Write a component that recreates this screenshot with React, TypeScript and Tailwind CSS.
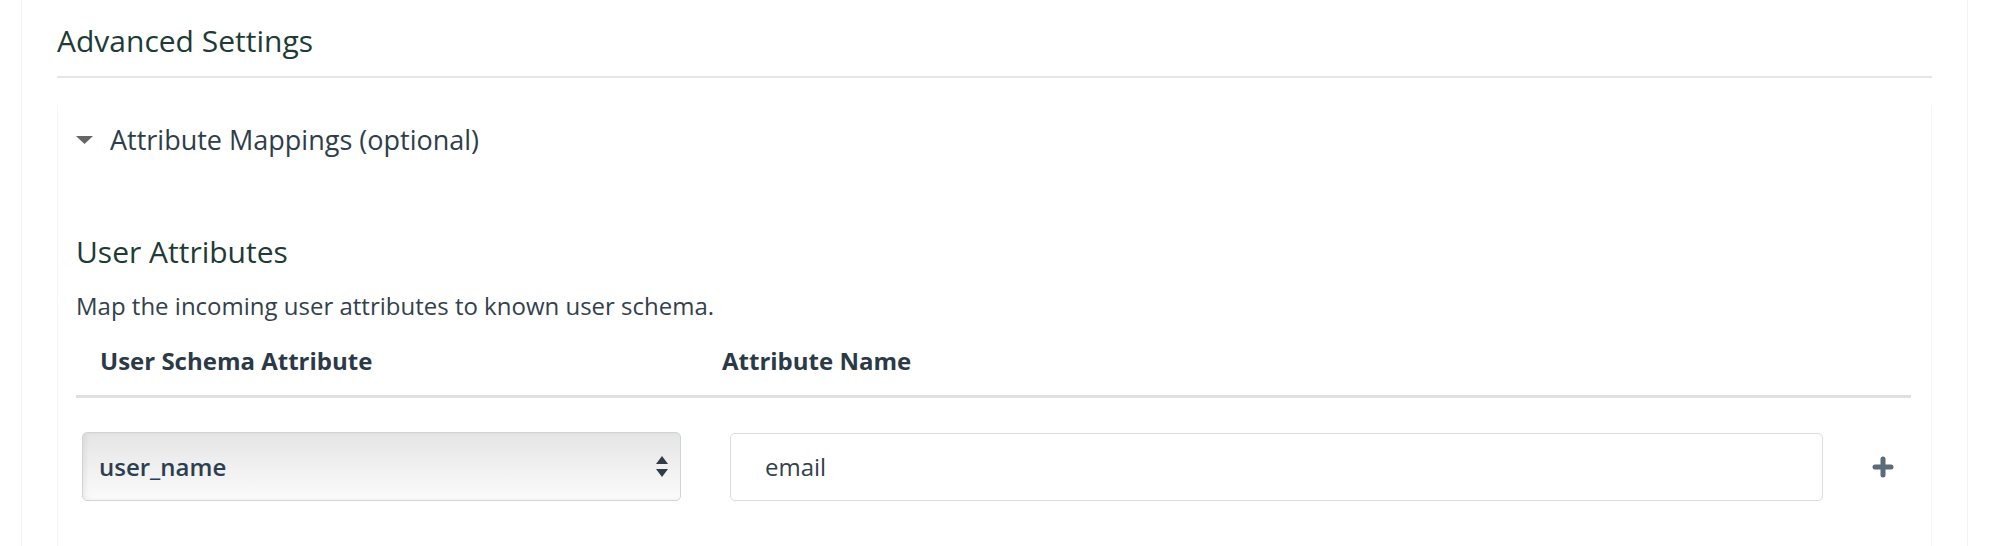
import { useState } from 'react';

interface Mapping {
  schemaAttr: string;
  attrName: string;
}

function Caret() {
  return (
    <svg width="17" height="9" viewBox="0 0 17 9" className="shrink-0">
      <polygon points="0,0 17,0 8.5,8" fill="#666666" />
    </svg>
  );
}

function SelectArrows() {
  return (
    <svg width="12" height="22" viewBox="0 0 12 22" className="shrink-0">
      <polygon points="6,0 12,8 0,8" fill="#2f3d49" />
      <polygon points="0,13 12,13 6,21" fill="#2f3d49" />
    </svg>
  );
}

function PlusIcon() {
  return (
    <svg width="22" height="22" viewBox="0 0 22 22">
      <path d="M11 3v16M3 11h16" stroke="#5b6b78" strokeWidth="5" strokeLinecap="round" />
    </svg>
  );
}

export default function App() {
  const [open, setOpen] = useState(true);
  const [rows] = useState<Mapping[]>([{ schemaAttr: 'user_name', attrName: 'email' }]);

  return (
    <div className="min-h-screen bg-white font-['Open_Sans',sans-serif]">
      <div className="ml-[21px] w-[1947px] min-h-[546px] border-x border-[#f3f3f3] px-[35px] pt-[23px]">
        {/* Section title */}
        <h2 className="border-b-2 border-[#e6e6e6] pb-[17px] text-[30px] leading-[36px] text-[#1e3b36]">
          Advanced Settings
        </h2>

        {/* Collapsible panel */}
        <div className="mt-[27px] min-h-[441px] border-x border-[#f6f6f6] pl-[18px] pr-[20px] pt-[17px]">
          <button
            type="button"
            onClick={() => setOpen(!open)}
            className="flex items-center gap-[17px] text-[27px] leading-[36px] text-[#2f3e4a]"
          >
            <Caret />
            <span>Attribute Mappings (optional)</span>
          </button>

          {open && (
            <div>
              <h3 className="mt-[76px] text-[30px] leading-[36px] text-[#1e3b36]">User Attributes</h3>
              <p className="mt-[20px] text-[24px] leading-[32px] text-[#33414c]">
                Map the incoming user attributes to known user schema.
              </p>

              {/* Table header */}
              <div className="mt-[23px] grid grid-cols-[630px_1fr_67px] border-b-[3px] border-[#e0e0e0] pb-[18px] text-[24px] font-bold leading-[32px] text-[#2b3a46]">
                <div className="pl-[24px]">User Schema Attribute</div>
                <div className="pl-[16px]">Attribute Name</div>
                <div />
              </div>

              {/* Mapping rows */}
              {rows.map((row) => (
                <div key={row.schemaAttr} className="mt-[34px] grid grid-cols-[630px_1fr_67px] items-center">
                  <div className="pl-[6px]">
                    <div className="flex h-[69px] w-[599px] items-center justify-between rounded-[5px] border border-[#cfd5d5] bg-gradient-to-b from-[#e5e5e5] to-[#fbfbfb] pl-[16px] pr-[12px] shadow-[inset_3px_0_4px_rgba(0,0,0,0.05)]">
                      <span className="text-[24px] font-semibold text-[#2c3e50]">{row.schemaAttr}</span>
                      <SelectArrows />
                    </div>
                  </div>
                  <div className="pl-[24px]">
                    <div className="flex h-[68px] w-[1093px] items-center rounded-[5px] border border-[#d9dddd] bg-white pl-[34px] text-[24px] text-[#33414c]">
                      {row.attrName}
                    </div>
                  </div>
                  <div className="flex justify-center pl-[10px]">
                    <PlusIcon />
                  </div>
                </div>
              ))}
            </div>
          )}
        </div>
      </div>
    </div>
  );
}
